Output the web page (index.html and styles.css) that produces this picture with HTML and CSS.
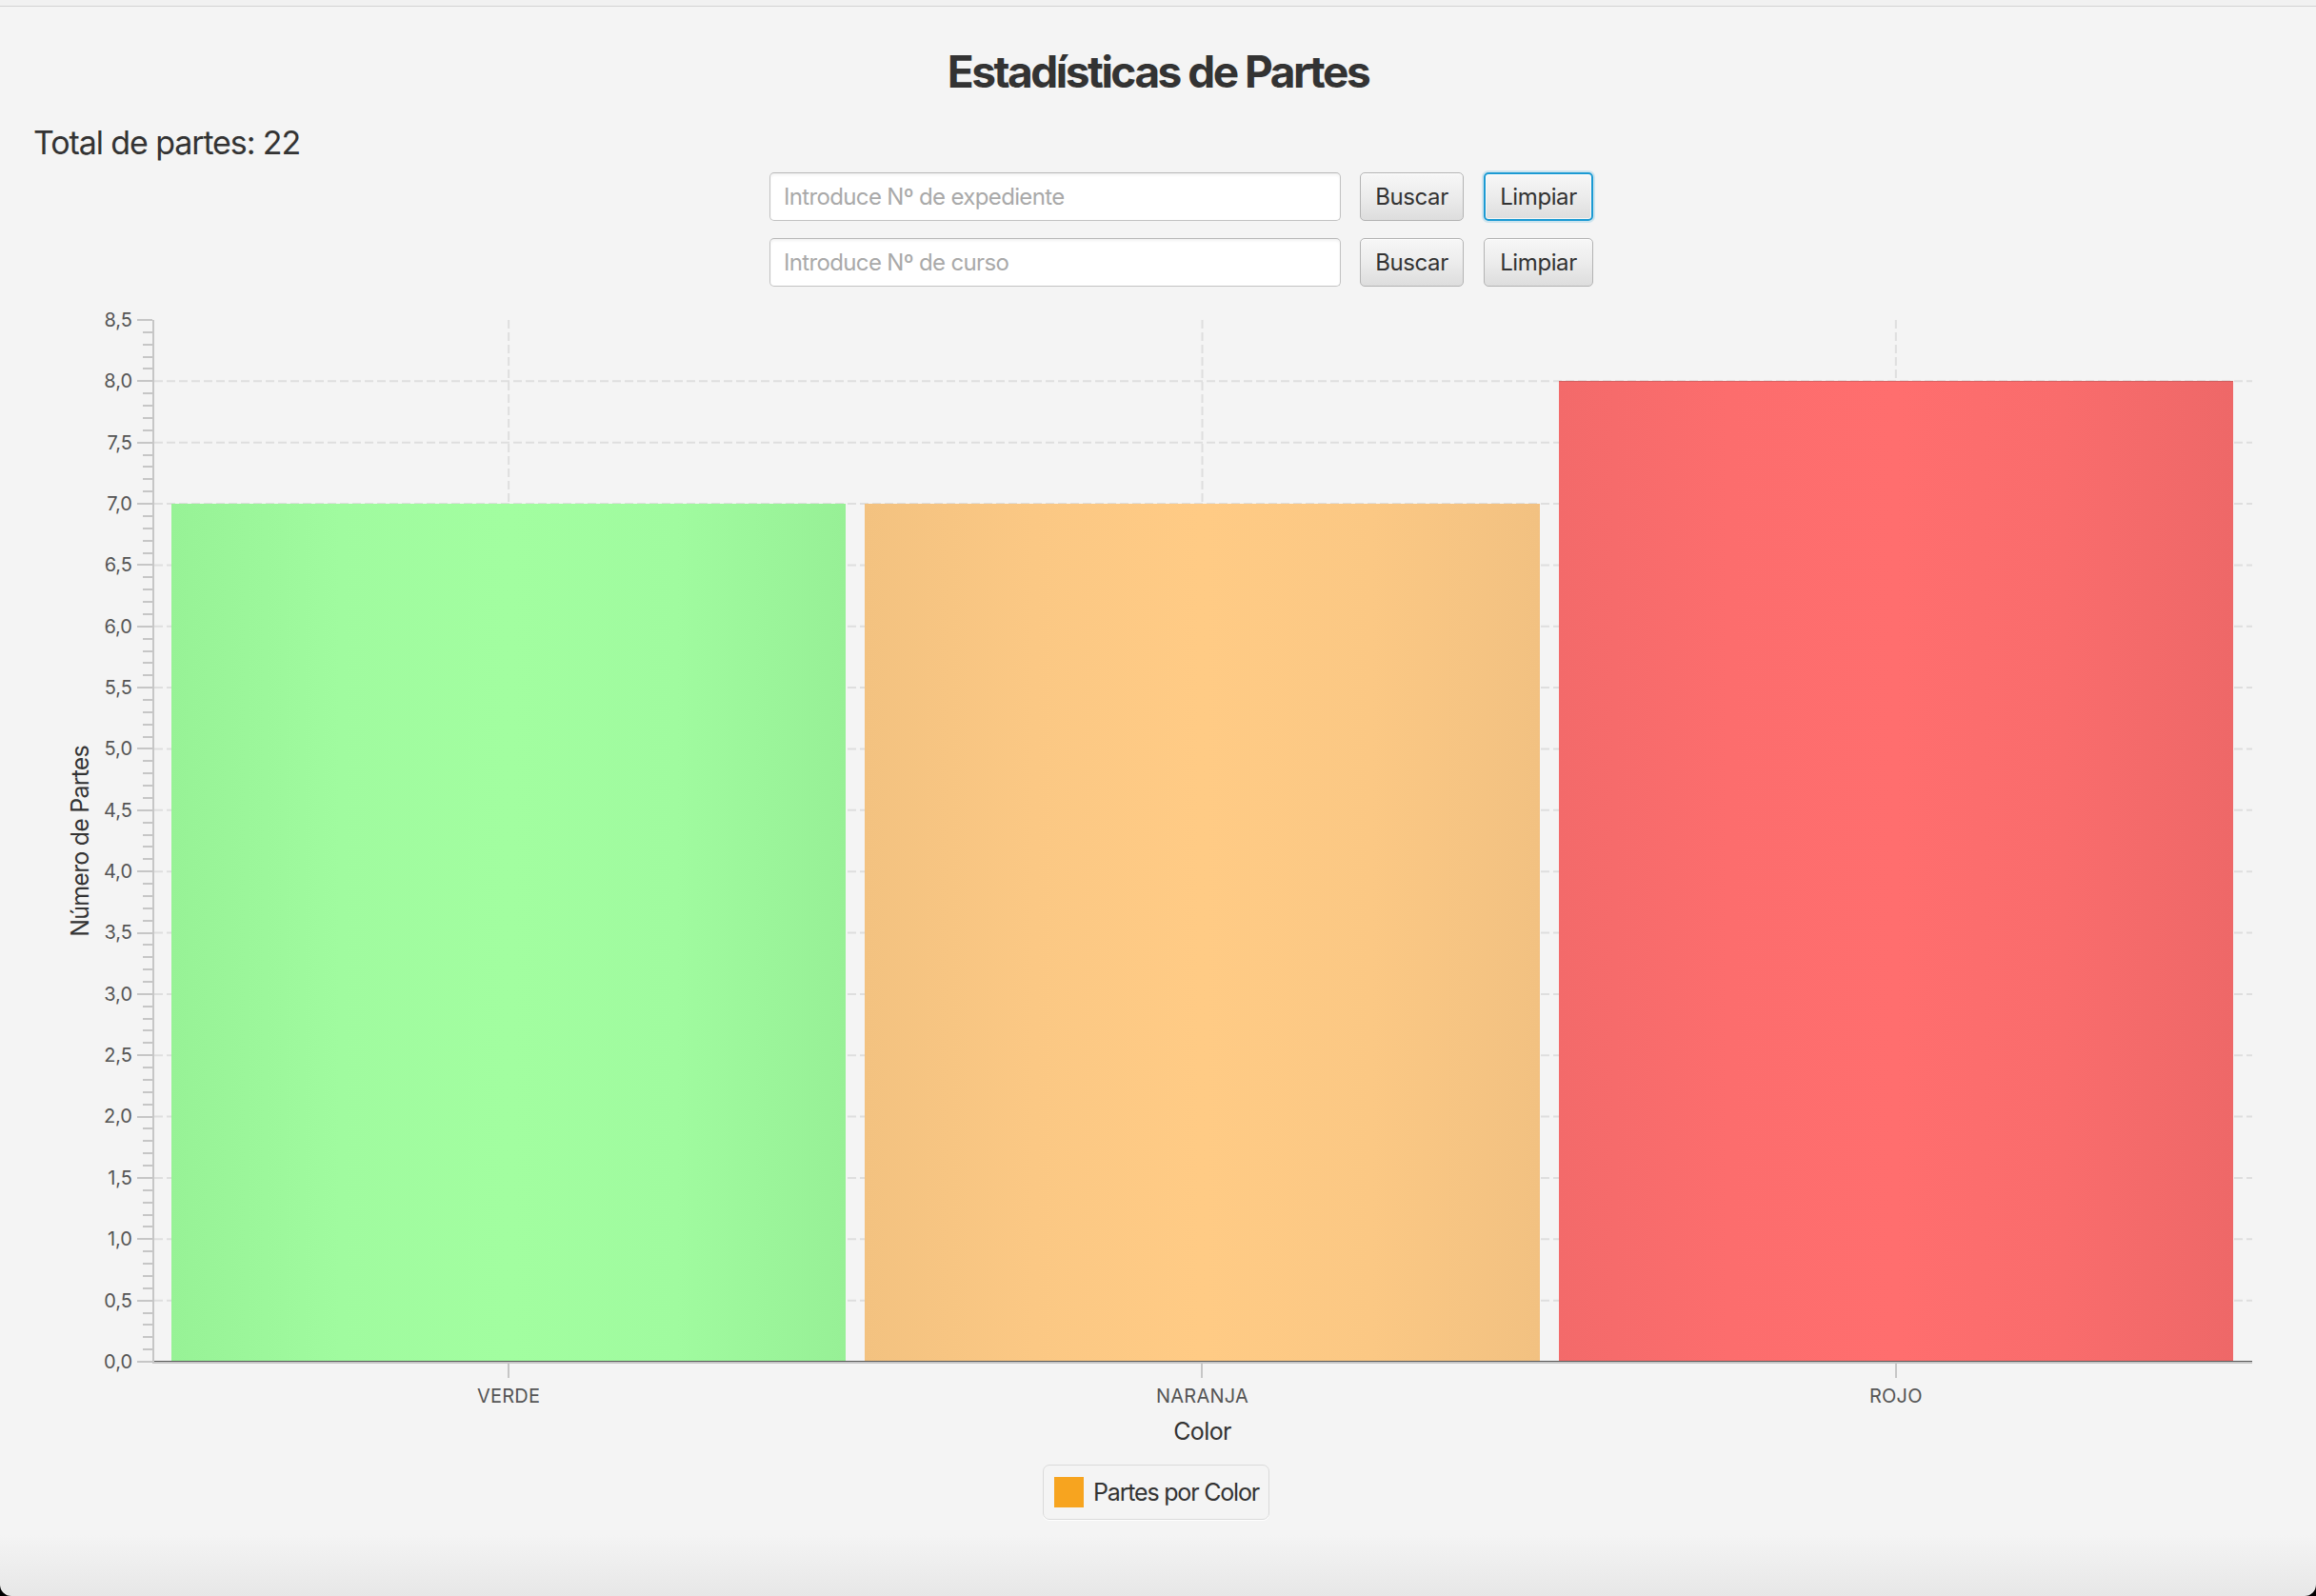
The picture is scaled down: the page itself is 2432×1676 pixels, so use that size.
FILE: index.html
```html
<!DOCTYPE html>
<html lang="es">
<head>
<meta charset="utf-8">
<title>Estadísticas de Partes</title>
<link rel="stylesheet" href="styles.css">
</head>
<body>
<div class="window">
  <div class="topline"></div>
  <h1 class="title">Estadísticas de Partes</h1>
  <div class="total">Total de partes: 22</div>
  <div class="search-row">
    <input class="field" type="text" placeholder="Introduce Nº de expediente">
    <button class="btn btn-buscar">Buscar</button>
    <button class="btn btn-limpiar focused">Limpiar</button>
  </div>
  <div class="search-row second">
    <input class="field" type="text" placeholder="Introduce Nº de curso">
    <button class="btn btn-buscar">Buscar</button>
    <button class="btn btn-limpiar">Limpiar</button>
  </div>

  <div class="chart">
    <div class="y-title"><span>Número de Partes</span></div>
    <div class="y-labels">
      <span>8,5</span><span>8,0</span><span>7,5</span><span>7,0</span><span>6,5</span><span>6,0</span>
      <span>5,5</span><span>5,0</span><span>4,5</span><span>4,0</span><span>3,5</span><span>3,0</span>
      <span>2,5</span><span>2,0</span><span>1,5</span><span>1,0</span><span>0,5</span><span>0,0</span>
    </div>
    <div class="y-ticks"></div>
    <div class="plot">
      <svg class="grid" xmlns="http://www.w3.org/2000/svg">
        <g class="hgrid">
          <line x1="0" x2="100%" y1="5.882%" y2="5.882%"/>
          <line x1="0" x2="100%" y1="11.765%" y2="11.765%"/>
          <line x1="0" x2="100%" y1="17.647%" y2="17.647%"/>
          <line x1="0" x2="100%" y1="23.529%" y2="23.529%"/>
          <line x1="0" x2="100%" y1="29.412%" y2="29.412%"/>
          <line x1="0" x2="100%" y1="35.294%" y2="35.294%"/>
          <line x1="0" x2="100%" y1="41.176%" y2="41.176%"/>
          <line x1="0" x2="100%" y1="47.059%" y2="47.059%"/>
          <line x1="0" x2="100%" y1="52.941%" y2="52.941%"/>
          <line x1="0" x2="100%" y1="58.824%" y2="58.824%"/>
          <line x1="0" x2="100%" y1="64.706%" y2="64.706%"/>
          <line x1="0" x2="100%" y1="70.588%" y2="70.588%"/>
          <line x1="0" x2="100%" y1="76.471%" y2="76.471%"/>
          <line x1="0" x2="100%" y1="82.353%" y2="82.353%"/>
          <line x1="0" x2="100%" y1="88.235%" y2="88.235%"/>
          <line x1="0" x2="100%" y1="94.118%" y2="94.118%"/>
        </g>
        <g class="vgrid">
          <line y1="0" y2="100%" x1="16.894%" x2="16.894%"/>
          <line y1="0" y2="100%" x1="49.955%" x2="49.955%"/>
          <line y1="0" y2="100%" x1="83.016%" x2="83.016%"/>
        </g>
      </svg>
      <div class="bars">
        <div class="bar verde" style="height: 82.353%"></div>
        <div class="bar naranja" style="height: 82.353%"></div>
        <div class="bar rojo" style="height: 94.118%"></div>
      </div>
    </div>
    <div class="x-axis">
      <div class="x-cat"><i class="x-tick"></i><span>VERDE</span></div>
      <div class="x-cat"><i class="x-tick"></i><span>NARANJA</span></div>
      <div class="x-cat"><i class="x-tick"></i><span>ROJO</span></div>
    </div>
    <div class="x-title">Color</div>
  </div>

  <div class="legend-wrap">
    <div class="legend">
      <span class="legend-swatch"></span>
      <span class="legend-text">Partes por Color</span>
    </div>
  </div>
</div>
</body>
</html>
```

FILE: styles.css
```css
html, body {
  margin: 0;
  padding: 0;
  background: #000;
}

body {
  font-family: Inter, "Liberation Sans", sans-serif;
  color: #333;
}

.window {
  box-sizing: border-box;
  height: 1676px;
  overflow: hidden;
  background: linear-gradient(to bottom, #f4f4f4 0, #f4f4f4 1612px, #e7e7e7 1676px);
  border-radius: 0 0 12px 12px;
}

.topline {
  height: 6px;
  background: #f1f1f1;
  border-bottom: 1px solid #d3d3d3;
}

.title {
  margin: 40px 0 0;
  height: 56px;
  line-height: 56px;
  font-size: 46px;
  font-weight: 700;
  letter-spacing: -2.5px;
  text-align: center;
  color: #333;
}

.total {
  margin-top: 26px;
  padding-left: 35px;
  height: 42px;
  line-height: 42px;
  font-size: 34px;
  font-weight: 400;
  letter-spacing: -1.1px;
  color: #333;
}

.search-row {
  margin-top: 10px;
  display: flex;
  justify-content: center;
  align-items: center;
  gap: 20px;
  padding-left: 49px;
  height: 51px;
}

.search-row.second {
  margin-top: 18px;
}

.field {
  box-sizing: border-box;
  width: 600px;
  height: 51px;
  padding: 0 14px;
  border: 1.5px solid #c2c2c2;
  border-top-color: #b8b8b8;
  border-radius: 5px;
  background: #fff;
  box-shadow: inset 0 2px 3px rgba(0, 0, 0, 0.05);
  font-family: Inter, "Liberation Sans", sans-serif;
  font-size: 24px;
  letter-spacing: -0.65px;
  color: #333;
  outline: none;
}

.field::placeholder {
  color: #a9a9a9;
}

.btn {
  box-sizing: border-box;
  height: 51px;
  padding: 0 14px;
  border: 1.5px solid #b3b3b3;
  border-radius: 5px;
  background: linear-gradient(to bottom, #f7f7f7 0%, #ececec 50%, #dddddd 100%);
  box-shadow: inset 0 1px 0 rgba(255, 255, 255, 0.8);
  font-family: Inter, "Liberation Sans", sans-serif;
  font-size: 24px;
  letter-spacing: -0.4px;
  color: #333;
}

.btn-buscar {
  width: 109px;
}

.btn-limpiar {
  width: 115px;
  margin-left: 1px;
}

.btn.focused {
  border: 2px solid #1b9ad3;
  box-shadow: 0 0 0 2px rgba(27, 154, 211, 0.18), inset 0 0 0 1px rgba(255, 255, 255, 0.7);
}

/* ---------- Chart ---------- */
.chart {
  margin-top: 35px;
  padding: 0 67px 0 70px;
  display: grid;
  grid-template-columns: 28px 41px 5px 16px 1fr;
  grid-template-rows: 1096px auto auto;
}

.y-title {
  grid-column: 1;
  grid-row: 1;
  display: flex;
  align-items: center;
  justify-content: center;
  height: 1094px;
}

.y-title span {
  writing-mode: vertical-rl;
  transform: rotate(180deg);
  font-size: 25px;
  line-height: 30px;
  letter-spacing: -0.8px;
  color: #333;
  white-space: nowrap;
}

.y-labels {
  grid-column: 2;
  grid-row: 1;
  height: 1094px;
  display: flex;
  flex-direction: column;
  justify-content: space-between;
  align-items: flex-end;
}

.y-labels span {
  height: 0;
  display: flex;
  align-items: center;
  font-size: 20px;
  line-height: 24px;
  color: #555;
}

.y-ticks {
  grid-column: 4;
  grid-row: 1;
  margin-top: -1px;
  height: 1096px;
  background-image:
    repeating-linear-gradient(to bottom, #c6c6c6 0, #c6c6c6 2px, transparent 2px, transparent 64.353px),
    repeating-linear-gradient(to bottom, #c6c6c6 0, #c6c6c6 2px, transparent 2px, transparent 12.8706px);
  background-size: 16px 100%, 10px 100%;
  background-position: right top, right top;
  background-repeat: no-repeat;
}

.plot {
  grid-column: 5;
  grid-row: 1;
  position: relative;
  box-sizing: border-box;
  height: 1096px;
  border-left: 2px solid #c6c6c6;
  border-bottom: 2px solid #c6c6c6;
}

.grid {
  position: absolute;
  left: 0;
  top: 0;
  width: 100%;
  height: 100%;
}

.grid line {
  stroke: #dedede;
  stroke-width: 2;
  stroke-dasharray: 9 4;
}

.bars {
  position: relative;
  box-sizing: border-box;
  height: 100%;
  display: flex;
  align-items: flex-end;
  gap: 20px;
  padding: 0 20px 0 18px;
  border-bottom: 1px solid #5c5c5c;
}

.bar {
  flex: 1;
}

.verde {
  background: linear-gradient(to right, #97f296 0%, #a0fb9f 25%, #a2fea0 50%, #a0fb9f 75%, #97f096 100%);
}

.naranja {
  background: linear-gradient(to right, #f3c280 0%, #fbc884 25%, #ffcb85 50%, #fbc884 75%, #f2c181 100%);
}

.rojo {
  background: linear-gradient(to right, #f36a6a 0%, #fc6d6d 25%, #ff6e6e 50%, #f96c6c 75%, #ee6868 100%);
  box-shadow: inset 0 1px 0 rgba(150, 80, 80, 0.35);
}

.x-axis {
  grid-column: 5;
  grid-row: 2;
  display: flex;
  gap: 20px;
  padding: 0 20px;
}

.x-cat {
  flex: 1;
  display: flex;
  flex-direction: column;
  align-items: center;
}

.x-tick {
  display: block;
  width: 2px;
  height: 15px;
  background: #c6c6c6;
}

.x-cat span {
  margin-top: 7px;
  font-size: 20px;
  line-height: 24px;
  color: #555;
  letter-spacing: 0.2px;
}

.x-title {
  grid-column: 5;
  grid-row: 3;
  margin-top: 10px;
  text-align: center;
  font-size: 25px;
  line-height: 30px;
  letter-spacing: -0.6px;
  color: #333;
}

.legend-wrap {
  margin-top: 20px;
  display: flex;
  justify-content: center;
  padding-right: 4px;
}

.legend {
  box-sizing: border-box;
  height: 58px;
  display: flex;
  align-items: center;
  gap: 10px;
  padding: 0 10px 0 11px;
  border: 1.5px solid #dadada;
  border-radius: 7px;
  background: #f4f4f4;
  box-shadow: 0 1px 0 #fff;
}

.legend-swatch {
  width: 31px;
  height: 32px;
  background: #f7a41f;
}

.legend-text {
  font-size: 25px;
  line-height: 30px;
  letter-spacing: -1.2px;
  color: #333;
}
```
